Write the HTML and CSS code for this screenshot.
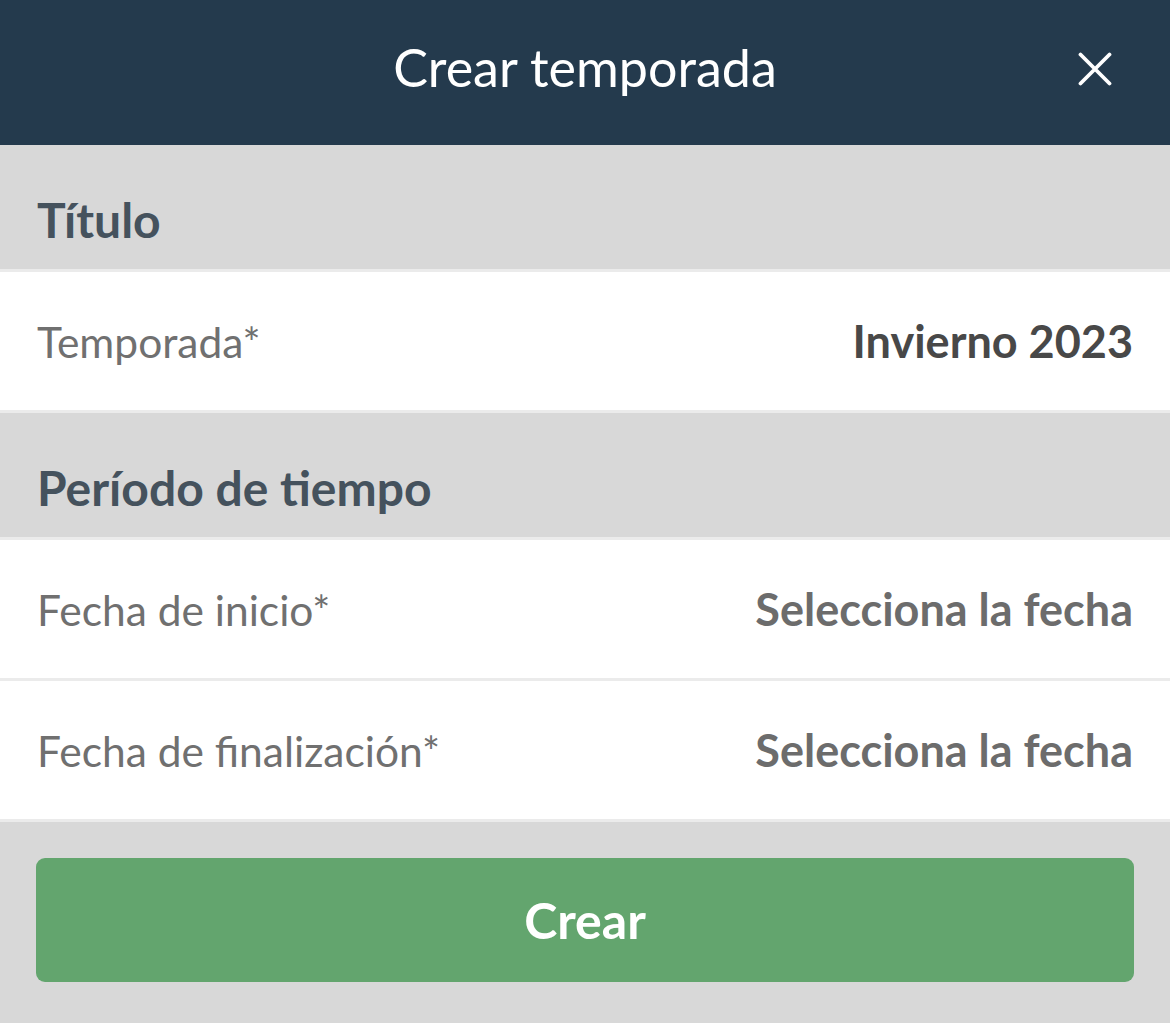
FILE: index.html
```html
<!DOCTYPE html>
<html lang="es">
<head>
    <meta charset="UTF-8">
    <meta name="viewport" content="width=device-width, initial-scale=1.0">
    <title>Crear temporada</title>
    <link rel="stylesheet" href="styles.css">
</head>
<body>
    <header class="topbar">
        <h1 class="topbar-title">Crear temporada</h1>
        <button type="button" class="close-btn" aria-label="Cerrar">
            <svg width="34" height="34" viewBox="0 0 34 34">
                <path d="M2.5 2.5 L31.5 31.5 M31.5 2.5 L2.5 31.5" stroke="#fff" stroke-width="3.8" stroke-linecap="round"/>
            </svg>
        </button>
    </header>

    <section class="group">
        <h2 class="group-title">Título</h2>
        <div class="row">
            <span class="row-label">Temporada*</span>
            <span class="row-value dark">Invierno 2023</span>
        </div>
    </section>

    <section class="group">
        <h2 class="group-title">Período de tiempo</h2>
        <div class="row">
            <span class="row-label">Fecha de inicio*</span>
            <span class="row-value">Selecciona la fecha</span>
        </div>
        <div class="row">
            <span class="row-label">Fecha de finalización*</span>
            <span class="row-value">Selecciona la fecha</span>
        </div>
    </section>

    <div class="actions">
        <button type="button" class="create-btn">Crear</button>
    </div>
</body>
</html>
```

FILE: styles.css
```css
body {
    margin: 0;
    font-family: Lato, "Noto Sans", sans-serif;
    background-color: #d8d8d8;
}
.topbar {
    background-color: #243a4d;
    height: 145px;
    box-sizing: border-box;
    padding-bottom: 12px;
    display: flex;
    align-items: center;
    justify-content: center;
    position: relative;
}
.topbar-title {
    margin: 0;
    color: #fff;
    font-size: 52px;
    font-weight: 400;
}
.close-btn {
    position: absolute;
    right: 58px;
    top: 52px;
    padding: 0;
    border: none;
    background: none;
    display: flex;
}
.group-title {
    margin: 0;
    height: 127px;
    box-sizing: border-box;
    padding: 25px 37px 0;
    display: flex;
    align-items: center;
    font-size: 48px;
    font-weight: 700;
    color: #45525d;
    border-bottom: 3px solid #ebebeb;
}
.row {
    background-color: #fff;
    height: 141px;
    box-sizing: border-box;
    padding: 0 37px;
    display: flex;
    align-items: center;
    justify-content: space-between;
    border-bottom: 3px solid #ebebeb;
}
.row-label {
    font-size: 42.5px;
    color: #707070;
}
.row-value {
    font-size: 45px;
    font-weight: 700;
    color: #6c6c6c;
}
.row-value.dark {
    color: #484848;
}
.actions {
    padding: 36px 36px 40px;
}
.create-btn {
    width: 100%;
    height: 124px;
    border: none;
    border-radius: 9px;
    background-color: #63a56e;
    color: #fff;
    font-family: inherit;
    font-size: 50px;
    font-weight: 700;
    cursor: pointer;
}
```
